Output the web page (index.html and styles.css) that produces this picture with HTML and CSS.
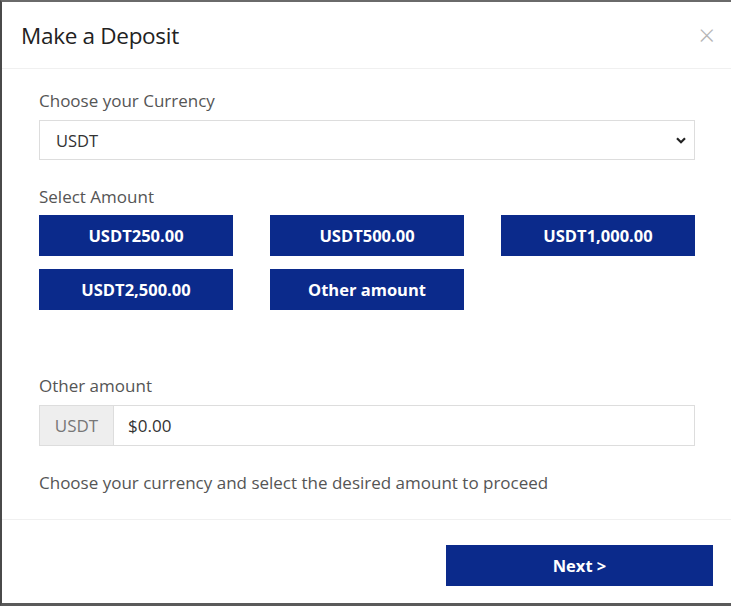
FILE: index.html
```html
<!DOCTYPE html>
<html lang="en">
<head>
  <meta charset="UTF-8">
  <title>Make a Deposit</title>
  <link rel="stylesheet" href="styles.css">
</head>
<body>
  <div class="modal">
    <div class="modal-header">
      <h2>Make a Deposit</h2>
      <span class="close">&times;</span>
    </div>

    <div class="modal-body">
      <label class="field-label">Choose your Currency</label>
      <div class="select-box">
        <span>USDT</span>
        <svg width="10" height="7" viewBox="0 0 10 7"><path d="M1 1.2 L5 5.2 L9 1.2" fill="none" stroke="#222" stroke-width="2.2"/></svg>
      </div>

      <label class="field-label amount-label">Select Amount</label>
      <div class="amounts">
        <button>USDT250.00</button>
        <button>USDT500.00</button>
        <button>USDT1,000.00</button>
        <button>USDT2,500.00</button>
        <button>Other amount</button>
      </div>

      <label class="field-label other-label">Other amount</label>
      <div class="input-group">
        <span class="prefix">USDT</span>
        <span class="value">$0.00</span>
      </div>

      <p class="hint">Choose your currency and select the desired amount to proceed</p>
    </div>

    <div class="modal-footer">
      <button class="next">Next &gt;</button>
    </div>
  </div>
</body>
</html>
```

FILE: styles.css
```css
body {
  margin: 0;
  padding: 0;
  font-family: "Open Sans", Arial, sans-serif;
  background: #fff;
}
.modal {
  height: 601px;
  border-left: 2px solid #4a4a4a;
  border-top: 2px solid #6a6a6a;
  border-bottom: 3px solid #5a5a5a;
  display: flex;
  flex-direction: column;
  background: #fff;
}
.modal-header {
  display: flex;
  align-items: center;
  justify-content: space-between;
  height: 66px;
  padding: 0 16px 0 19px;
  border-bottom: 1px solid #f0f0f0;
}
.modal-header h2 {
  margin: 0;
  font-size: 22.5px;
  font-weight: 400;
  color: #222;
  letter-spacing: -0.3px;
}
.close {
  font-size: 29px;
  color: #b5b5b5;
  font-weight: 300;
  line-height: 1;
  margin-top: -2px;
}
.modal-body {
  flex: 1;
  padding: 21px 36px 0 37px;
}
.field-label {
  display: block;
  font-size: 17px;
  color: #555;
  line-height: 22px;
  margin-bottom: 8px;
}
.select-box {
  height: 38px;
  border: 1px solid #ddd;
  display: flex;
  align-items: center;
  justify-content: space-between;
  padding: 0 8px 0 16px;
  font-size: 16.5px;
  color: #333;
}
.amount-label {
  margin-top: 26px;
  margin-bottom: 7px;
}
.amounts {
  display: grid;
  grid-template-columns: repeat(3, 1fr);
  column-gap: 37px;
  row-gap: 13px;
}
.amounts button, .next {
  height: 41px;
  background-color: #0b2a8b;
  color: #fff;
  border: none;
  font-family: inherit;
  font-size: 16.5px;
  font-weight: 700;
}
.other-label {
  margin-top: 65px;
}
.input-group {
  display: flex;
  height: 39px;
  border: 1px solid #ddd;
  font-size: 17px;
}
.prefix {
  width: 73px;
  background: #eee;
  color: #777;
  border-right: 1px solid #ddd;
  display: flex;
  align-items: center;
  justify-content: center;
}
.value {
  display: flex;
  align-items: center;
  padding-left: 14px;
  color: #333;
}
.hint {
  margin: 26px 0 0;
  font-size: 17px;
  color: #555;
  line-height: 22px;
}
.modal-footer {
  height: 83px;
  border-top: 1px solid #f0f0f0;
  display: flex;
  justify-content: flex-end;
  align-items: center;
  padding-right: 18px;
}
.next {
  width: 267px;
  margin-top: 8px;
}
```
